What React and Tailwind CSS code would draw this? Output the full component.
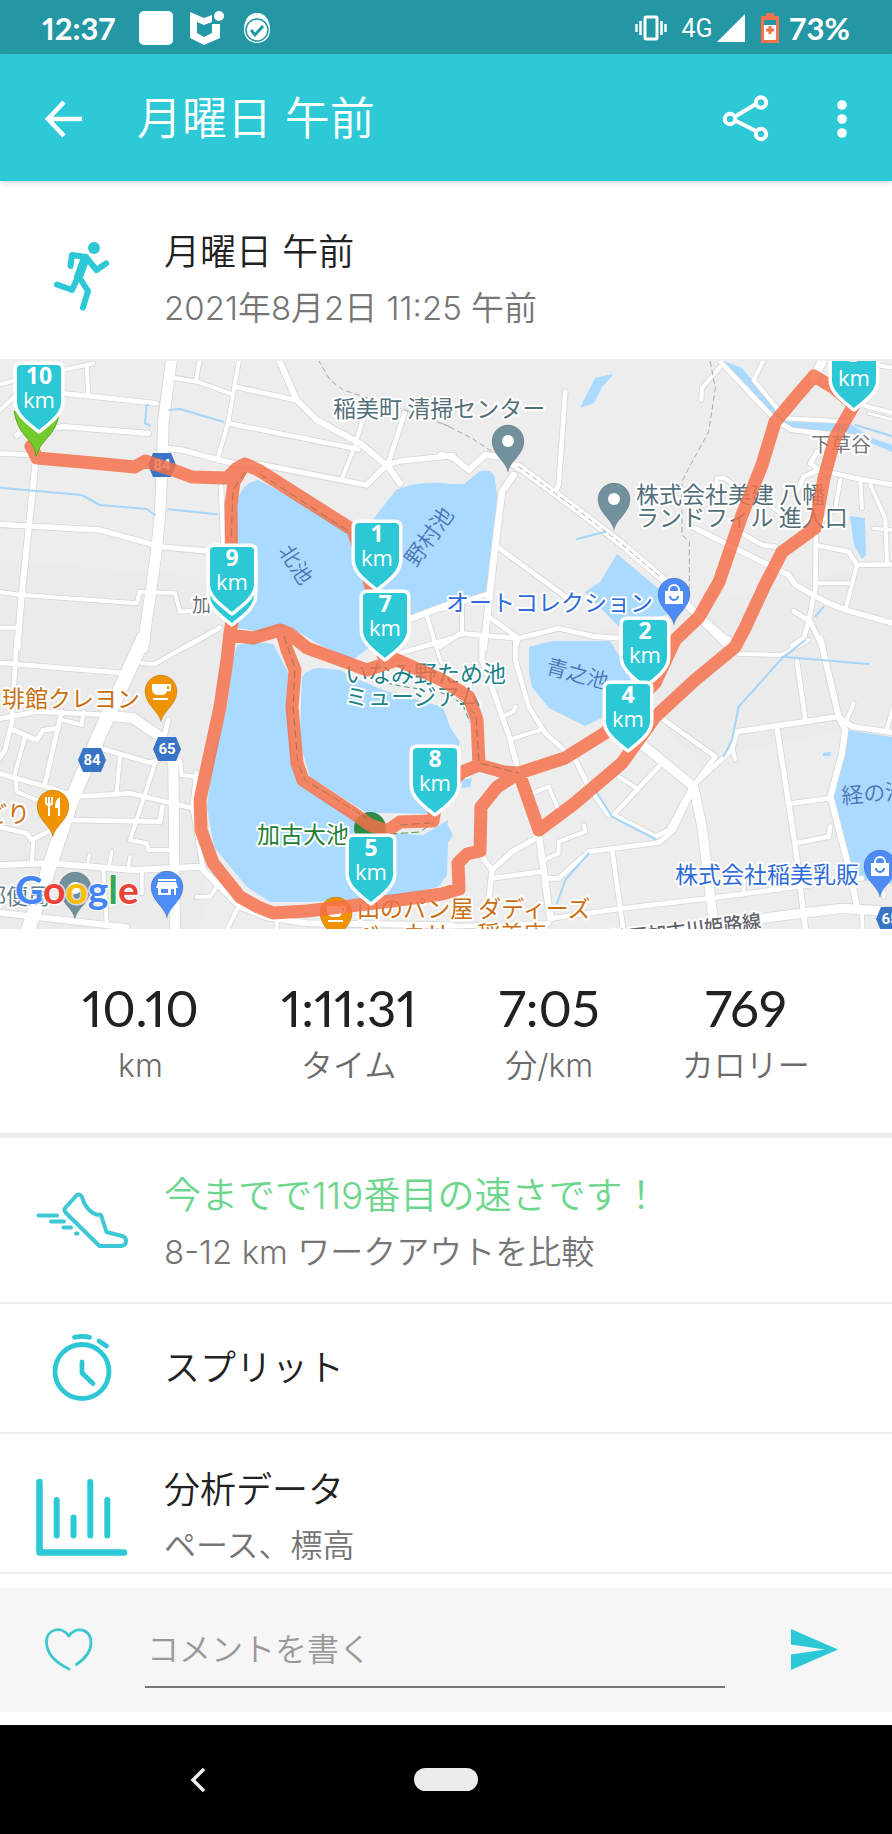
import React from "react";

const QUADRANTS = [
  {
    x: 0,
    y: 355,
    roads: [
      ["M517 -5 L490 200 L487 330 L480 480 L468 600 L428 880", 32],
      ["M-5 90 L50 75 L190 45 L280 25", 12],
      ["M260 35 L265 115", 12],
      ["M190 115 L470 145", 14],
      ["M50 242 L62 232 L190 215 L445 235", 16],
      ["M-5 170 L60 110", 12],
      ["M-5 295 L100 300", 14],
      ["M108 310 L65 720 L52 880", 18],
      ["M-5 508 L300 525 L480 575 L640 590", 16],
      ["M-5 710 L65 720 L410 745 L420 710 L525 715 L540 770 L575 768", 12],
      ["M-5 818 L55 818", 12],
      ["M520 68 L590 80 L690 115", 12],
      ["M600 10 L588 78", 12],
      ["M718 10 L685 200 L655 305", 12],
      ["M705 95 L885 135", 14],
      ["M500 280 L545 285 L640 310 L700 325 L790 330 L1100 390 L1160 330 L1200 318 L1360 302", 16],
      ["M835 10 L890 135 L950 195 L1080 265 L1165 335 L1200 385", 18],
      ["M685 205 L1075 283", 14],
      ["M1090 190 L1065 270 L1025 375", 12],
      ["M1215 170 L1165 325", 14],
      ["M663 395 L670 560", 14],
      ["M550 880 L660 818", 14],
      ["M1235 790 L1355 745", 18],
      ["M1280 780 L1310 880", 12],
    ],
    streams: [
      "M-5 398 L245 420 L300 450 L440 462 L465 480",
      "M505 463 L650 478",
      "M445 150 L440 150 L435 205 L450 212",
      "M508 165 L540 162 L600 180 L670 200",
    ],
    dashes: ["M955 15 L990 75 L1030 105 L1200 160 L1350 215"],
  },
  {
    x: 442,
    y: 355,
    roads: [
      ["M-5 300 L30 305 L80 345 L130 300 L180 305 L230 340", 18],
      ["M230 335 L400 460 L530 560 L660 670 L760 775 L880 880", 22],
      ["M215 360 L180 410 L160 570 L145 700 L125 880", 20],
      ["M370 110 L350 390 L340 410", 14],
      ["M165 575 L370 725", 14],
      ["M-5 762 L145 715", 14],
      ["M60 740 L60 840", 12],
      ["M-5 875 L55 835 L230 850 L350 820 L460 845 L540 850", 14],
      ["M140 785 L230 850 L220 880", 14],
      ["M835 20 L1000 195 L1050 225 L1230 245", 14],
      ["M778 135 L780 100 L835 35", 12],
      ["M965 15 L935 75 L1030 190 L1220 200", 12],
      ["M1145 10 L1115 70", 26],
      ["M1300 30 L1355 38", 12],
      ["M1260 150 L1355 175", 12],
      ["M1280 175 L1355 195", 8],
      ["M1125 290 L1105 325 L1130 345 L1085 365 L1070 400", 14],
      ["M1130 345 L1250 372 L1355 390", 14],
      ["M1195 375 L1180 460 L1140 500", 12],
      ["M1255 380 L1260 460", 12],
      ["M1285 390 L1330 490 L1335 625", 12],
      ["M820 400 L825 370 L850 370 L900 410", 12],
      ["M1295 520 L1350 525", 10],
      ["M940 425 L1040 490", 10],
      ["M760 520 L1040 660 L1060 690 L1150 740 L1210 765 L1355 805", 16],
      ["M900 535 L960 570 L1000 575", 14],
      ["M1122 540 L1120 700 L1100 800 L1085 850 L1050 872", 14],
      ["M1120 570 L1220 590 L1245 630 L1355 628", 14],
      ["M1245 630 L1210 765", 12],
      ["M1120 685 L1220 685", 12],
      ["M1055 768 L1105 800 L1143 880", 14],
      ["M860 880 L780 800", 14],
    ],
    streams: ["M1240 210 L1355 245", "M405 552 L490 530", "M1120 785 L1145 755"],
    dashes: [
      "M0 205 L90 250 L150 290",
      "M805 20 L820 100 L800 230 L740 340 L720 380 L720 540 L742 560 L742 700",
      "M230 335 L400 460 L530 560 L660 670",
    ],
  },
  {
    x: 0,
    y: 640,
    roads: [
      ["M430 -5 L300 280 L215 480 L78 890", 42],
      ["M50 -5 L35 250 L15 330 L-5 360", 14],
      ["M-5 68 L380 100", 14],
      ["M425 70 L465 72 L590 0", 12],
      ["M335 228 L400 235 L480 290 L520 370 L525 890", 30],
      ["M-5 237 L110 215 L330 225", 14],
      ["M250 215 L245 255 L190 240", 12],
      ["M185 215 L135 430", 14],
      ["M40 270 L110 300 L130 270 L175 265", 14],
      ["M75 290 L45 400 L50 455 L110 480", 12],
      ["M-5 400 L140 440 L230 470 L390 460 L580 505", 14],
      ["M300 325 L450 368 L475 360 L505 240", 14],
      ["M360 350 L350 455", 12],
      ["M465 370 L390 600 L440 610 L445 630 L505 630", 12],
      ["M540 360 L545 405 L590 410", 12],
      ["M200 540 L480 545 L487 500", 14],
      ["M-5 560 L80 580 L95 600 L155 570", 14],
      ["M100 600 L95 670", 12],
      ["M262 675 L268 645", 10],
      ["M328 675 L335 635", 10],
      ["M385 680 L390 650", 10],
      ["M-5 675 L150 670 L400 690 L600 680 L720 800 L800 832 L920 850 L1355 856", 18],
      ["M608 680 L578 500 L590 400", 14],
      ["M310 690 L320 845", 12],
      ["M-5 818 L380 862", 18],
      ["M425 690 L425 760", 12],
      ["M590 770 L630 770 L650 740", 12],
      ["M710 810 L675 880", 12],
      ["M830 845 L830 880", 12],
      ["M1200 40 L1355 -5", 14],
      ["M1300 0 L1325 70", 10],
    ],
    streams: [],
    dashes: [],
  },
  {
    x: 442,
    y: 640,
    roads: [
      ["M120 -5 L120 60 L160 170 L205 300 L230 400", 16],
      ["M220 -5 L220 60 L260 200 L310 280 L400 360 L440 440 L500 525", 14],
      ["M205 298 L300 268", 12],
      ["M180 230 L215 215 L220 200", 12],
      ["M290 585 L325 835", 20],
      ["M120 650 L150 690 L210 635 L290 590", 16],
      ["M150 690 L140 785", 16],
      ["M150 715 L300 695", 14],
      ["M590 305 L755 440 L780 560 L815 850", 28],
      ["M660 235 L820 350 L760 430", 14],
      ["M885 275 L870 330 L760 430", 14],
      ["M885 275 L1190 230 L1230 260 L1355 278", 16],
      ["M868 310 L880 360", 12],
      ["M650 380 L515 525 L640 590 L680 570 L745 450", 14],
      ["M745 465 L695 570 L650 608 L440 635 L350 715 L320 715", 14],
      ["M530 410 L585 445", 12],
      ["M305 660 L350 640 L350 605 L430 575 L425 555", 12],
      ["M510 625 L545 880", 14],
      ["M270 460 L320 440 L350 510", 12],
      ["M1135 -5 L1190 230 L1210 270 L1200 340 L1165 470 L1225 700 L1245 800", 18],
      ["M1065 65 L1090 240", 14],
      ["M1235 190 L1215 240", 12],
      ["M1355 200 L1335 265", 12],
      ["M1005 265 L1060 620 L1092 880", 16],
      ["M1050 490 L1160 475", 14],
      ["M1060 610 L1160 590 L1165 560", 14],
      ["M330 835 L540 805 L800 775 L1260 715", 14],
      ["M560 890 L760 865 L1000 830 L1200 805 L1355 815", 28],
      ["M905 720 L905 765", 12],
      ["M1320 700 L1325 770", 12],
      ["M1260 820 L1262 880", 12],
      ["M860 -5 L890 42 L1020 45 L1100 0", 12],
      ["M-5 860 L320 850", 14],
    ],
    streams: [
      "M1090 0 L1020 55 L890 200 L870 300 L845 350",
      "M1020 50 L1280 72",
      "M460 450 L510 530 L640 597",
      "M440 640 L370 720 L345 790",
    ],
    dashes: [],
  },
];

const LAKES = [
  "M237 628 L236 510 Q238 484 258 480 Q275 487 360 537 L378 513 L396 490 Q420 480 450 484 L464 484 L480 471 Q494 468 495 480 L497 495 L495 542 L488 592 L442 603 L412 617 L370 647 L353 660 L320 645 L292 628 L277 627 L262 632 Z",
  "M237 645 Q255 641 273 644 L288 672 L287 700 L290 730 L293 770 L303 787 L353 817 L387 833 L423 835 L448 820 L446 850 L443 880 Q440 888 433 888 L393 897 L310 902 L270 902 L247 887 L214 847 L207 807 L213 757 L227 707 L233 660 Z",
  "M302 677 Q308 668 320 668 L340 670 L353 677 L383 690 L443 707 L450 727 L460 742 L455 760 L446 800 L430 814 L393 813 L367 813 L310 777 L302 750 L300 727 Z",
  "M462 780 L472 778 L470 787 L462 788 Z",
  "M448 825 L453 836 L448 842 L447 875 L440 884 L436 830 Z",
  "M529 647 L552 641 L610 641 L622 660 L632 683 L602 718 L585 726 L549 708 L532 687 L529 673 Z",
  "M617 554 L660 590 L680 610 L622 630 L585 592 L600 582 Z",
  "M847 730 L892 737 L892 884 L862 880 L850 860 L839 820 L834 797 L845 750 Z",
  "M850 516 L865 518 L866 555 L862 559 L854 545 Z",
  "M724 361 L742 368 L779 412 L789 422 L849 423 L872 438 L892 445 L892 452 L852 435 L789 428 L772 418 Z",
  "M613 374 L612 376 L602 387 L594 403 L580 408 L595 378 Z",
  "M823 753 L830 752 L831 756 L823 756 Z",
];

const ROUTES = [
  "M31 446 L37 458 L93 463 L135 467 L145 461 L173 470 L192 477 L227 478 L236 469 L245 464 L260 471 L353 530 L372 590 L383 655 L397 660",
  "M245 464 L234 482 L231 505 L232 622 L230 633 L227 660 L220 707 L207 767 L200 800 L201 830 L213 863 L240 897 L258 907 L273 913 L307 911 L392 901 L442 894 L459 889 L458 863 L467 854 L480 851 L481 807 L497 787 L519 773 L565 758 L605 733 L655 683 L675 640 L699 617 L719 582 L742 515 L762 465 L775 422 L795 398 L814 376 L834 388 L854 405 L835 438 L824 478 L815 528 L782 552 L765 585 L745 628 L735 647 L695 680 L655 717 L622 763 L575 803 L539 830 L519 773 L504 772 L479 765 L477 720 L469 697 L442 680 L397 660 L367 670 L340 660 L307 648 L290 634 L280 630 L253 638 L230 635",
  "M282 632 L287 650 L295 670 L292 707 L297 763 L303 780 L353 813 L370 825 L387 831 L400 822 L433 821 L437 795 L462 772 L479 765",
];

const ROUTE_DASHES = [
  "M260 474 L353 534",
  "M245 472 L233 490 L231 540",
  "M284 636 L295 668 L293 707 L298 763 L305 780 L367 818",
  "M400 825 L430 823",
  "M460 700 L476 715 L479 763 L519 773",
];

const KM_MARKERS = [
  { x: 39, y: 365, n: "10" },
  { x: 232, y: 558, n: "" },
  { x: 232, y: 547, n: "9" },
  { x: 377, y: 523, n: "1" },
  { x: 385, y: 593, n: "7" },
  { x: 645, y: 620, n: "2" },
  { x: 628, y: 684, n: "4" },
  { x: 435, y: 748, n: "8" },
  { x: 371, y: 837, n: "5" },
  { x: 854, y: 343, n: "3" },
];

const LABELS = [
  { x: 333, y: 417, size: 23, fill: "#546e7a", text: "稲美町 清掃センター" },
  { x: 636, y: 503, size: 23, fill: "#546e7a", text: "株式会社美建 八幡" },
  { x: 636, y: 526, size: 23, fill: "#546e7a", text: "ランドフィル 進入口" },
  { x: 811, y: 452, size: 20, fill: "#75777b", text: "下草谷" },
  { x: 446, y: 611, size: 23, fill: "#2f6bd8", text: "オートコレクション" },
  { x: 345, y: 682, size: 23, fill: "#1d8489", text: "いなみ野ため池" },
  { x: 345, y: 705, size: 23, fill: "#1d8489", text: "ミュージアム" },
  { x: 2, y: 707, size: 23, fill: "#c96f12", text: "琲館クレヨン" },
  { x: -16, y: 822, size: 23, fill: "#c96f12", text: "どり" },
  { x: 257, y: 843, size: 23, fill: "#1e7e34", text: "加古大池" },
  { x: 357, y: 917, size: 23, fill: "#c96f12", text: "山のパン屋 ダディーズ" },
  { x: 357, y: 942, size: 23, fill: "#c96f12", text: "ベーカリー 稲美店" },
  { x: 192, y: 612, size: 19, fill: "#6b6e72", text: "加" },
  { x: -16, y: 904, size: 22, fill: "#607d8b", text: "郵便局" },
  { x: 675, y: 883, size: 23, fill: "#2f6bd8", text: "株式会社稲美乳販" },
  { x: 611, y: 946, size: 19, fill: "#5f6368", text: "神戸加古川姫路線", rotate: -7, weight: 500 },
];

const WATER_LABELS = [
  { x: 842, y: 804, size: 22, text: "経の池", rotate: -5 },
  { x: 545, y: 673, size: 21, text: "青之池", rotate: 15 },
  { x: 278, y: 551, size: 21, text: "北池", rotate: 57 },
  { x: 416, y: 568, size: 22, text: "野村池", rotate: -54 },
];

const CJK = '"Noto Sans CJK JP", sans-serif';

function Pin({ x, y, color, children }) {
  return (
    <g transform={`translate(${x} ${y})`}>
      <path
        d="M0 31 C-2 20 -16 14 -16 0 A16 16 0 1 1 16 0 C16 14 2 20 0 31Z"
        fill={color}
        stroke="#00000022"
      />
      {children || <circle r="6" fill="#fff" />}
    </g>
  );
}

const Bag = () => (
  <g>
    <path d="M-9 -3 H9 V10 H-9Z" fill="#fff" />
    <path d="M-5 -3 V-4 A5 5 0 0 1 5 -4 V-3" fill="none" stroke="#fff" strokeWidth="2" />
    <path d="M-4 2 A4 4 0 0 0 4 2" fill="none" stroke="#4285f4" strokeWidth="2" />
  </g>
);

const Cup = () => (
  <g fill="#fff">
    <path d="M-9 -7 H10 V0 H6 Q5 4 1 4 H-4 Q-9 3 -9 -2Z M6 -5 V-2 H8 V-5Z" fillRule="evenodd" />
    <path d="M-8 7 H7 V9 H-8Z" />
  </g>
);

const Fork = () => (
  <g fill="none" stroke="#fff" strokeWidth="2">
    <path d="M-7 -9 V-4 Q-7 -1 -4 -1 Q-1 -1 -1 -4 V-9 M-4 -9 V10" />
    <path d="M6 10 V-7 Q3 -5 3 1 H6" fill="#fff" />
  </g>
);

const Shop = () => (
  <g fill="#fff">
    <path d="M-9 -8 H9 V-6 H-9Z M-9 -5 H9 L11 1 H-11Z" />
    <path d="M-9 1 H9 V8 H-9Z M-6 2 V6 H1 V2Z M4 2 V8 H7 V2Z" fillRule="evenodd" />
  </g>
);

function Shield({ x, y, n }) {
  return (
    <g transform={`translate(${x} ${y})`}>
      <path d="M-9 -12 H9 L14 0 L9 12 H-9 L-14 0Z" fill="#3a74c6" />
      <text y="5" textAnchor="middle" fill="#fff" fontSize="15" fontWeight="700" fontFamily="Roboto, sans-serif">
        {n}
      </text>
    </g>
  );
}

function KmMarker({ x, y, n }) {
  return (
    <g transform={`translate(${x} ${y})`} fontFamily='"Open Sans", sans-serif' textAnchor="middle" fill="#fff">
      <path
        d="M-22 4 Q-22 0 -18 0 H18 Q22 0 22 4 V37 C22 49 9 57 0 65 C-9 57 -22 49 -22 37Z"
        fill="#2dc8d6"
        stroke="#fff"
        strokeWidth="7"
        strokeLinejoin="round"
        paintOrder="stroke"
      />
      {n && (
        <>
          <text y="19" fontSize="23" fontWeight="700">{n}</text>
          <text y="43" fontSize="22" fontWeight="400">km</text>
        </>
      )}
    </g>
  );
}

function RouteMap() {
  return (
    <svg viewBox="0 361 892 568" className="block h-auto w-full bg-[#eeeded]" role="img" aria-label="ルートマップ">
      <path d="M0 560 L240 580 L200 929 L0 929Z" fill="#ebebeb" />
      <path d="M560 640 L892 560 L892 720 L700 760Z" fill="#ebebeb" />
      {LAKES.map((d) => (
        <path key={d} d={d} fill="#aadaff" />
      ))}
      <g fill="none" strokeLinejoin="round" strokeLinecap="round">
        {QUADRANTS.map((q, i) => (
          <g key={i} transform={`translate(${q.x} ${q.y}) scale(0.33333)`} stroke="#d4d7db">
            {q.roads.map(([d, w]) => (
              <path key={d} d={d} strokeWidth={w + 5} />
            ))}
          </g>
        ))}
        {QUADRANTS.map((q, i) => (
          <g key={i} transform={`translate(${q.x} ${q.y}) scale(0.33333)`}>
            {q.roads.map(([d, w]) => (
              <path key={d} d={d} strokeWidth={w} stroke="#fff" />
            ))}
            {q.streams.map((d) => (
              <path key={d} d={d} strokeWidth="6" stroke="#a5d5f8" />
            ))}
            {q.dashes.map((d) => (
              <path key={d} d={d} strokeWidth="3" stroke="#a9a9a9" strokeDasharray="14 12" />
            ))}
          </g>
        ))}
        <path d="M378 681 L400 686 L440 692 L462 703 L470 722" stroke="#4b9b7a" strokeDasharray="5 4" />
        <path d="M390 834 L420 832 L434 822" stroke="#4b9b5a" strokeDasharray="7 4" />
      </g>
      <g fontFamily={CJK} paintOrder="stroke" strokeLinejoin="round">
        {WATER_LABELS.map((l) => (
          <text key={l.text} fontSize={l.size} fill="#4c74b8" transform={`translate(${l.x} ${l.y}) rotate(${l.rotate})`}>
            {l.text}
          </text>
        ))}
        {LABELS.map((l) => (
          <text
            key={l.text}
            fontSize={l.size}
            fill={l.fill}
            stroke="#fff"
            strokeWidth="4"
            fontWeight={l.weight || 400}
            transform={`translate(${l.x} ${l.y}) rotate(${l.rotate || 0})`}
          >
            {l.text}
          </text>
        ))}
      </g>
      <Shield x={162} y={465} n="84" />
      <Shield x={92} y={760} n="84" />
      <Shield x={167} y={749} n="65" />
      <Shield x={890} y={919} n="65" />
      <circle cx="370" cy="828" r="16" fill="#2e8b43" />
      <Pin x={336} y={913} color="#f09300"><Cup /></Pin>
      <Pin x={508} y={441} color="#73909d" />
      <Pin x={614} y={499} color="#73909d" />
      <g fill="none" stroke="#f4704a" strokeWidth="13" strokeLinejoin="round" strokeLinecap="round" opacity="0.84">
        <path d={ROUTES.join(" ")} />
      </g>
      <g fill="none" stroke="#8a7340" strokeDasharray="8 4" opacity="0.75">
        {ROUTE_DASHES.map((d) => (
          <path key={d} d={d} />
        ))}
      </g>
      <Pin x={674} y={594} color="#4d8bf5"><Bag /></Pin>
      <Pin x={880} y={866} color="#4d8bf5"><Bag /></Pin>
      <Pin x={161} y={691} color="#f09300"><Cup /></Pin>
      <Pin x={53} y={806} color="#f09300"><Fork /></Pin>
      <Pin x={75} y={888} color="#73909d" />
      <Pin x={167} y={887} color="#4d8bf5"><Shop /></Pin>
      <path d="M14 411 Q17 428 27 438 Q35 446 36 456 Q39 446 47 438 Q57 428 59 414 L36 424Z" fill="#73cc2b" stroke="#5aa522" />
      {KM_MARKERS.map((m) => (
        <KmMarker key={`${m.x}-${m.y}`} {...m} />
      ))}
      <text x="15" y="904" fontFamily="Lato, sans-serif" fontSize="39" fontWeight="700" stroke="#ffffffb0" strokeWidth="3" paintOrder="stroke">
        <tspan fill="#4285f4">G</tspan>
        <tspan fill="#ea4335">o</tspan>
        <tspan fill="#fbbc05">o</tspan>
        <tspan fill="#4285f4">g</tspan>
        <tspan fill="#34a853">l</tspan>
        <tspan fill="#ea4335">e</tspan>
      </text>
    </svg>
  );
}

function StatusBar() {
  return (
    <div className="flex h-[54px] items-center bg-[#2497a4] px-[42px] pt-[2px] text-white">
      <span className="font-[Lato,sans-serif] text-[31px] leading-none font-bold proportional-nums">12:37</span>
      <span className="ml-6 h-[34px] w-[34px] rounded-[5px] bg-white" />
      <svg className="ml-4" width="36" height="36" viewBox="0 0 36 36" fill="#fff">
        <path d="M1 2 L15 8 L23 5 V12 L15 15 L8 12 V23 L15 27 L23 23 V14 H31 V28 L15 35 L1 28Z" />
        <circle cx="30" cy="6" r="6.500" fill="#2497a4" />
        <circle cx="30" cy="6" r="5" />
      </svg>
      <svg className="ml-[18px]" width="28" height="34" viewBox="0 0 28 34">
        <path d="M14 2 C23 2 27 10 27 19 C27 27 21 32 14 32 C7 32 1 27 1 19 C1 10 5 2 14 2Z" fill="#fff" />
        <circle cx="14" cy="19" r="11" fill="none" stroke="#2497a4" strokeWidth="1.5" />
        <path d="M8 19 L12 24 L20 15" fill="none" stroke="#2497a4" strokeWidth="3" />
      </svg>
      <svg className="ml-auto" width="34" height="26" viewBox="0 0 34 26" fill="none" stroke="#fff">
        <rect x="11" y="2" width="12" height="22" rx="1.5" strokeWidth="3" />
        <path d="M2.500 9 V17 M31.500 9 V17" strokeWidth="2.500" />
        <path d="M6.500 6 V20 M27.500 6 V20" strokeWidth="2.500" />
      </svg>
      <span className="ml-[14px] font-[Roboto,sans-serif] text-[25px] leading-none font-normal">4G</span>
      <svg className="ml-1" width="28" height="30" viewBox="0 0 28 30"><path d="M28 1 V29 H0Z" fill="#fff" /></svg>
      <svg className="ml-4" width="18" height="30" viewBox="0 0 18 30">
        <path d="M5 0 H13 V3 H18 V30 H0 V3 H5Z" fill="#f4734d" />
        <path d="M3 7 H15 V12 H3Z" fill="#2497a4" />
        <path d="M3 12 H15 V27 H3Z" fill="#fff" />
        <path d="M9 13 V21 M5 17 H13" stroke="#f4734d" strokeWidth="3" />
      </svg>
      <span className="ml-[10px] font-[Lato,sans-serif] text-[31px] leading-none font-bold">73%</span>
    </div>
  );
}

function Header() {
  return (
    <header className="relative flex h-[127px] items-center bg-[#2dc9d7] pt-[2px] pr-[30px] pl-[44px] text-white shadow-md">
      <button aria-label="戻る" className="w-[93px]">
        <svg width="40" height="40" viewBox="0 0 40 40" fill="none" stroke="#fff" strokeWidth="4.500">
          <path d="M38 20 H5 M20 3 L4 20 L20 37" />
        </svg>
      </button>
      <h1 className="text-[45px] leading-none">月曜日 午前</h1>
      <button aria-label="共有" className="ml-auto">
        <svg width="48" height="48" viewBox="0 0 48 48" fill="none" stroke="#fff" strokeWidth="4">
          <path d="M14 21 L34 9 M14 26 L34 36" />
          <circle cx="39" cy="7.500" r="5.200" />
          <circle cx="8" cy="24" r="5.200" />
          <circle cx="39" cy="39" r="5.200" />
        </svg>
      </button>
      <button aria-label="メニュー" className="ml-[52px]">
        <svg width="40" height="40" viewBox="0 0 40 40" fill="#fff">
          <circle cx="20" cy="6" r="4.800" />
          <circle cx="20" cy="20" r="4.800" />
          <circle cx="20" cy="34" r="4.800" />
        </svg>
      </button>
    </header>
  );
}

const RunnerIcon = () => (
  <svg width="58" height="72" viewBox="53 241 58 72" fill="none" stroke="#2dc8d6" strokeWidth="6" strokeLinecap="round" strokeLinejoin="round">
    <circle cx="94" cy="249" r="6" fill="#2dc8d6" stroke="none" />
    <path d="M70.500 267 L72 256 L86 258 L96.500 271 L106 264.500" />
    <path d="M85 260 L78.500 278" strokeWidth="9" />
    <path d="M78 278 L72 291 L57 285.500" />
    <path d="M79 278 L88 292 L83 308.500" />
  </svg>
);

const ShoeIcon = () => (
  <svg width="92" height="58" viewBox="36 1191 92 58" fill="none" stroke="#3ec8d6" strokeWidth="4" strokeLinecap="round" strokeLinejoin="round">
    <path d="M38.500 1215.500 H57 M51 1221.500 H64 M63.500 1227.500 H71 M76 1233.500 H77.500" />
    <path d="M76.500 1195.500 L65.500 1207.500 Q63.500 1210 65.500 1212.500 L99.500 1246 H121 Q126 1245.500 126 1241 Q126 1237 122 1236 L106.500 1232 L101 1215 Q96 1215 93 1213 Q85 1208 82 1197 Q80 1193 76.500 1195.500Z" />
  </svg>
);

const StopwatchIcon = () => (
  <svg width="60" height="70" viewBox="52 1334 60 70" fill="none" stroke="#2dc8d6" strokeWidth="4.800" strokeLinecap="round" strokeLinejoin="round">
    <circle cx="82" cy="1372.500" r="27" />
    <path d="M74.500 1338.300 Q82 1336.500 89.500 1338.300 M99 1342 L106.500 1347 M82 1363 V1374 L93 1384.500" />
  </svg>
);

const ChartIcon = () => (
  <svg width="92" height="78" viewBox="36 1478 92 78" fill="none" stroke="#2dc8d6" strokeWidth="6.500" strokeLinecap="round">
    <path d="M39.500 1482 V1552.500 H124" strokeLinejoin="round" />
    <path d="M56.700 1500 V1535.500 M73.500 1517.500 V1535.500 M90.300 1482 V1535.500 M107.300 1500 V1535.500" strokeWidth="6" />
  </svg>
);

const STATS = [
  ["10.10", "km"],
  ["1:11:31", "タイム"],
  ["7:05", "分/km"],
  ["769", "カロリー"],
];

export default function App() {
  return (
    <div className="flex min-h-screen flex-col bg-white font-[Inter,'Noto_Sans_CJK_JP',sans-serif] font-[350] text-[#212121]">
      <StatusBar />
      <Header />
      <section className="flex h-[180px] items-center border-b-2 border-[#ededed] pt-3">
        <div className="flex w-[164px] justify-center"><RunnerIcon /></div>
        <div className="pt-2">
          <h2 className="text-[36px] leading-[56px] font-[350]">月曜日 午前</h2>
          <p className="text-[33px] leading-[56px] text-[#757575]">2021年8月2日 11:25 午前</p>
        </div>
      </section>
      <RouteMap />
      <dl className="flex h-[209px] justify-evenly border-b-[5px] border-[#ededed] pt-[49px] text-center">
        {STATS.map(([value, label]) => (
          <div key={label} className="flex flex-col-reverse justify-end">
            <dt className="text-[32px] leading-[56px] text-[#6b6b6b]">{label}</dt>
            <dd className="font-[Lato,sans-serif] text-[51px] leading-[60px] font-normal proportional-nums">{value}</dd>
          </div>
        ))}
      </dl>
      <a href="#compare" className="flex h-[166px] items-center border-b-2 border-[#ededed]">
        <span className="flex w-[164px] justify-center"><ShoeIcon /></span>
        <span className="pt-2">
          <span className="block text-[37px] leading-[56px] text-[#6dd68c]">今までで119番目の速さです！</span>
          <span className="block text-[33px] leading-[56px] text-[#757575]">8-12 km ワークアウトを比較</span>
        </span>
      </a>
      <a href="#splits" className="flex h-[130px] items-center border-b-2 border-[#ededed]">
        <span className="flex w-[164px] justify-center"><StopwatchIcon /></span>
        <span className="text-[36px] leading-[56px]">スプリット</span>
      </a>
      <a href="#analysis" className="flex h-[140px] items-start overflow-hidden border-b-2 border-[#ededed] pt-7">
        <span className="flex w-[164px] justify-center pt-4"><ChartIcon /></span>
        <span className="h-[98px] overflow-hidden">
          <span className="block text-[36px] leading-[56px]">分析データ</span>
          <span className="block text-[32px] leading-[56px] text-[#757575]">ペース、標高</span>
        </span>
      </a>
      <form className="mt-[14px] mb-[13px] flex h-[124px] items-center bg-[#f6f6f6] pr-[53px] pl-[44px]" onSubmit={(e) => e.preventDefault()}>
        <button type="button" aria-label="いいね" className="w-[101px]">
          <svg width="50" height="46" viewBox="43.500 1627 50 46" fill="none" stroke="#3cc6cd" strokeWidth="2.800" strokeLinecap="round" strokeLinejoin="round">
            <path d="M68.500 1669 C56 1663 46 1654 46 1642 C46 1628 62 1626 68.300 1636 C75 1626 90.500 1628 90.500 1643 C90.500 1652 84 1659 76 1664.500" />
          </svg>
        </button>
        <input
          aria-label="コメントを書く"
          placeholder="コメントを書く"
          className="h-[76px] min-w-0 flex-1 border-b-2 border-[#757575] bg-transparent px-[2px] text-[32px] outline-none placeholder:text-[#999999]"
        />
        <button aria-label="送信" className="ml-[64px]">
          <svg width="50" height="42" viewBox="0 0 50 42" fill="#2dc8d6"><path d="M2 0 L49 20.500 L2 41 V25.500 L36 20.500 L2 15.500Z" /></svg>
        </button>
      </form>
      <nav className="grid min-h-[109px] flex-1 grid-cols-3 items-center bg-black">
        <button aria-label="戻る" className="flex justify-center pl-[98px]">
          <svg width="16" height="26" viewBox="0 0 16 26" fill="none" stroke="#eee" strokeWidth="3.500"><path d="M14 2 L3 13 L14 24" /></svg>
        </button>
        <button aria-label="ホーム" className="mx-auto h-[23px] w-[64px] rounded-full bg-[#ececec]" />
      </nav>
    </div>
  );
}
